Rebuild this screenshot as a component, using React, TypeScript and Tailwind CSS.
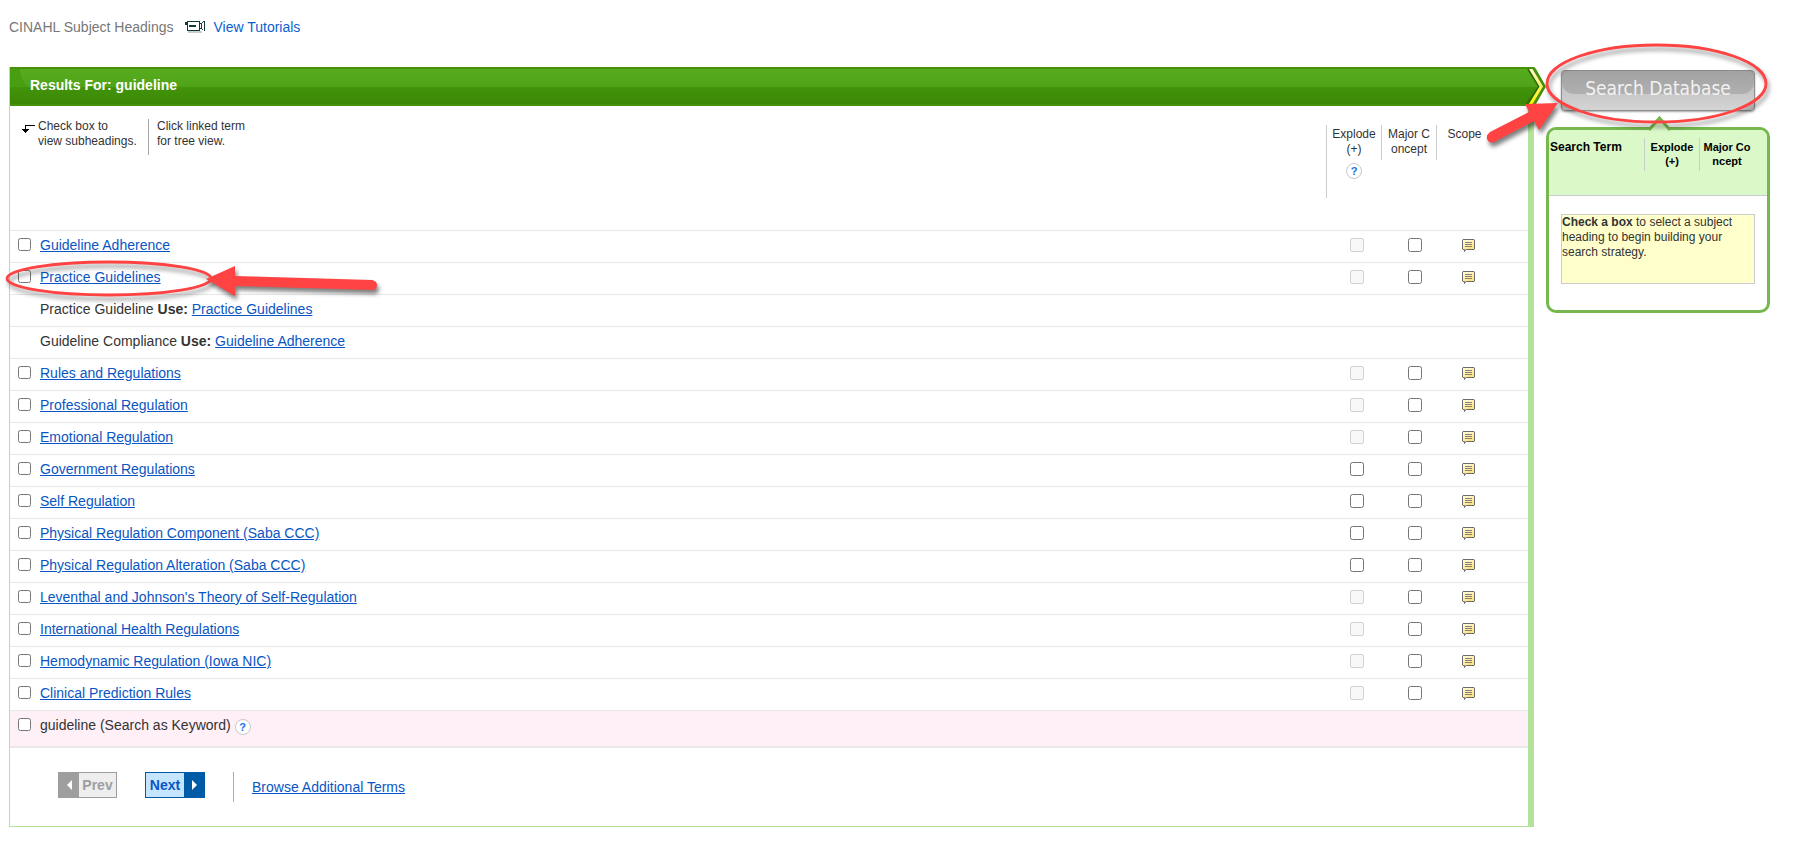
// SubjectHeadings — CINAHL subject heading results with the search strategy panel
import clsx from "clsx"

interface Heading {
  id: string
  term: string
  use?: string
  explode?: boolean
  highlighted?: boolean
}

const headings: Heading[] = [
  { id: "ga", term: "Guideline Adherence" },
  { id: "pg", term: "Practice Guidelines", highlighted: true },
  { id: "pgu", term: "Practice Guideline", use: "Practice Guidelines" },
  { id: "gcu", term: "Guideline Compliance", use: "Guideline Adherence" },
  { id: "rr", term: "Rules and Regulations" },
  { id: "pr", term: "Professional Regulation" },
  { id: "er", term: "Emotional Regulation" },
  { id: "gr", term: "Government Regulations", explode: true },
  { id: "sr", term: "Self Regulation", explode: true },
  { id: "prc", term: "Physical Regulation Component (Saba CCC)", explode: true },
  { id: "pra", term: "Physical Regulation Alteration (Saba CCC)", explode: true },
  { id: "lj", term: "Leventhal and Johnson's Theory of Self-Regulation" },
  { id: "ihr", term: "International Health Regulations" },
  { id: "hr", term: "Hemodynamic Regulation (Iowa NIC)" },
  { id: "cpr", term: "Clinical Prediction Rules" },
]

const linkClass = "text-[#0a55c4] underline underline-offset-1"

function CameraIcon() {
  return (
    <svg className="block" width="20" height="12" viewBox="0 0 20 12" shapeRendering="crispEdges" aria-hidden="true">
      <path d="M3 10h14v2H3z" fill="#c8cfcf" />
      <path d="M2 0h13v10H2z" fill="#0f3b3b" />
      <path d="M0 1h2v3H0z" fill="#0f3b3b" />
      <path d="M3 1h11v8H3z" fill="#fff" />
      <path d="M4 4h7v2H4z" fill="#0f3b3b" />
      <path d="M15 2h2v1h-2zM15 7h2v1h-2zM17 1h1v1h-1zM17 8h1v1h-1zM18 0h2v10h-1V1h-1z" fill="#0f3b3b" />
      <path d="M16 3h1v4h-1z" fill="#0f3b3b" />
    </svg>
  )
}

function NoteIcon() {
  return (
    <svg className="block" width="13" height="13" viewBox="0 0 13 13" aria-hidden="true">
      <defs>
        <linearGradient id="note" x1="0" y1="0" x2="0.4" y2="1">
          <stop offset="0" stopColor="#fffef0" />
          <stop offset="1" stopColor="#ffe06a" />
        </linearGradient>
      </defs>
      <path d="M1 .5h11l.5.5v9l-.5.5H4L2.500 12.500V10.500H1L.5 10V1z" fill="url(#note)" stroke="#6c6c6c" />
      <path d="M3 3.500h7M3 5.500h7M3 7.500h7" stroke="#857f78" />
    </svg>
  )
}

function HelpButton({ label }: { label: string }) {
  return (
    <button
      aria-label={label}
      className="flex size-4 items-center justify-center rounded-full border border-[#c4cace] bg-white text-[11px] leading-none font-bold text-[#1a73e8]"
    >
      ?
    </button>
  )
}

function Ellipse({ className, w, h }: { className: string; w: number; h: number }) {
  return (
    <svg
      className={clsx("pointer-events-none absolute overflow-visible", className)}
      width={w}
      height={h}
      aria-hidden="true"
    >
      <ellipse
        cx={w / 2}
        cy={h / 2}
        rx={w / 2 - 1}
        ry={h / 2 - 1}
        fill="none"
        stroke="#ff4343"
        strokeWidth="2.800"
        style={{ filter: "drop-shadow(2px 4px 2px rgba(0,0,0,0.4))" }}
      />
    </svg>
  )
}

function Row({ heading }: { heading: Heading }) {
  const { id, term, use, explode, highlighted } = heading
  return (
    <tr className="h-8 border-b border-[#e8e8e8]">
      <td className="relative pb-1 pl-2">
        {!use && (
          <input id={id} type="checkbox" aria-label={term} className="block size-[13px]" />
        )}
        {highlighted && (
          <>
            <Ellipse className="-top-0.5 -left-1" w={206} h={35} />
            <svg
              className="pointer-events-none absolute top-0 left-[196px] z-10 overflow-visible"
              width="172"
              height="34"
              aria-hidden="true"
            >
              <path
                d="M0 16L29 3V13L166 17Q171 18 171 22Q171 27 166 27L29 23V33Z"
                fill="#ff4343"
                style={{ filter: "drop-shadow(2px 4px 2px rgba(0,0,0,0.5))" }}
              />
            </svg>
          </>
        )}
      </td>
      <td className="pb-0.5">
        {use ? (
          <>
            {term} <b>Use:</b>{" "}
            <a href="#" className={linkClass}>{use}</a>
          </>
        ) : (
          <a href="#" className={linkClass}>{term}</a>
        )}
      </td>
      <td className="pb-0.5 pl-6">
        {!use && (
          <input type="checkbox" disabled={!explode} aria-label={`Explode ${term}`} className="block size-3.5" />
        )}
      </td>
      <td className="pb-0.5 pl-[27px]">
        {!use && <input type="checkbox" aria-label={`Major concept ${term}`} className="block size-3.5" />}
      </td>
      <td className="pb-0.5 pl-[26px]">
        {!use && (
          <button aria-label={`Scope of ${term}`} className="block">
            <NoteIcon />
          </button>
        )}
      </td>
    </tr>
  )
}

function ResultsHeader() {
  return (
    <div className="relative -mr-3 flex h-[39px] items-center">
      <div className="absolute inset-y-0 right-5 left-0 border-y-2 border-[#45910b] bg-linear-to-b from-[#57ac1e] from-0% via-[#4fa317] via-50% to-[#3d8b06]" />
      <div className="absolute right-5 bottom-0.5 left-0 h-[17px] bg-linear-to-b from-[#42940b] to-[#3b8805]" />
      <svg className="absolute top-0 left-0" width="28" height="39" aria-hidden="true">
        <path d="M0 2H10Q11 14 18 20H0Z" fill="#479e10" />
      </svg>
      <svg className="absolute top-0 right-0" width="32" height="39" viewBox="0 0 32 39" aria-hidden="true">
        <defs>
          <linearGradient id="bar" x1="0" y1="0" x2="0" y2="1">
            <stop offset="0" stopColor="#57ac1e" />
            <stop offset="0.500" stopColor="#4fa317" />
            <stop offset="0.510" stopColor="#42940b" />
            <stop offset="1" stopColor="#3b8805" />
          </linearGradient>
          <linearGradient id="chevron" x1="0" y1="0" x2="0" y2="1">
            <stop offset="0" stopColor="#fffbd0" />
            <stop offset="0.500" stopColor="#fdf06e" />
            <stop offset="1" stopColor="#fff600" />
          </linearGradient>
        </defs>
        <path d="M0 0H19Q21 0 22 2L32 19.500L22 37Q21 39 19 39H0Z" fill="#45910b" />
        <path d="M0 2H14L25 19.500L13 37H0Z" fill="url(#bar)" />
        <path d="M14 2L25 19.500L13 37" fill="none" stroke="#2d6b03" strokeWidth="2" />
        <path d="M15 2H18.500L29 19.500L18.500 37H15L25.500 19.500Z" fill="url(#chevron)" />
      </svg>
      <h1 className="relative pb-1 pl-5 font-bold text-white">Results For: guideline</h1>
    </div>
  )
}

function ResultsTable() {
  return (
    <table className="w-full table-fixed border-collapse">
      <colgroup>
        <col className="w-[30px]" />
        <col />
        <col className="w-[55px]" />
        <col className="w-[55px]" />
        <col className="w-[92px]" />
      </colgroup>
      <thead className="text-xs leading-[15px]">
        <tr className="h-[124px] border-b border-[#e8e8e8] align-top">
          <th colSpan={2} className="pt-[13px] pl-3 text-left font-normal">
            <div className="flex">
              <svg className="mt-[5px] mr-[3px]" width="13" height="10" viewBox="0 0 13 10" shapeRendering="crispEdges" aria-hidden="true">
                <path d="M3 1H13V2H4V5H7V6H6V7H5V8H4V9H3V8H2V7H1V6H0V5H3Z" fill="#000" />
              </svg>
              <p className="w-[110px]">
                Check box to
                <br />
                view subheadings.
              </p>
              <p className="h-9 border-l border-[#aaa] pl-2">
                Click linked term
                <br />
                for tree view.
              </p>
            </div>
          </th>
          <th className="pt-[19px] font-normal">
            <div className="flex h-[73px] flex-col items-center border-l border-[#ccc] pt-0.5">
              <span>Explode</span>
              <span className="mb-1.5">(+)</span>
              <HelpButton label="Explode help" />
            </div>
          </th>
          <th className="pt-[19px] font-normal">
            <div className="h-[35px] border-l border-[#ccc] pt-0.5">
              Major C<br />
              oncept
            </div>
          </th>
          <th className="pt-[19px] font-normal">
            <div className="h-[35px] border-l border-[#ccc] pt-0.5 pr-9">Scope</div>
          </th>
        </tr>
      </thead>
      <tbody>
        {headings.map((heading) => (
          <Row key={heading.id} heading={heading} />
        ))}
        <tr className="h-[37px] border-b-2 border-[#e8e8e8] bg-[#ffeff6]">
          <td className="pb-2 pl-2">
            <input id="keyword" type="checkbox" className="block size-[13px]" />
          </td>
          <td colSpan={4} className="pb-0.5">
            <div className="flex items-center gap-1">
              <label htmlFor="keyword" className="pb-1">guideline (Search as Keyword)</label>
              <HelpButton label="Keyword help" />
            </div>
          </td>
        </tr>
      </tbody>
    </table>
  )
}

function Pager() {
  return (
    <div className="flex h-[78px] items-start pt-6 pl-12">
      <button disabled className="flex h-[26px] items-center border border-[#9e9e9e] bg-[#eee] font-bold text-[#9e9e9e]">
        <span className="flex h-full w-5 items-center justify-center bg-[#9e9e9e]">
          <svg width="5" height="10" aria-hidden="true">
            <path d="M5 0V10L0 5Z" fill="#fff" />
          </svg>
        </span>
        <span className="w-[37px] text-center">Prev</span>
      </button>
      <button className="ml-7 flex h-[26px] items-center border border-[#005ba6] bg-[#c5e5ff] font-bold text-[#0a55c4]">
        <span className="w-[38px] text-center">Next</span>
        <span className="flex h-full w-5 items-center justify-center bg-[#005ba6]">
          <svg width="5" height="10" aria-hidden="true">
            <path d="M0 0V10L5 5Z" fill="#fff" />
          </svg>
        </span>
      </button>
      <div className="ml-7 flex h-[30px] items-center border-l border-[#8db4d6] pl-[18px]">
        <a href="#" className={linkClass}>Browse Additional Terms</a>
      </div>
    </div>
  )
}

function SearchPanel() {
  return (
    <aside className="relative w-56 shrink-0 pt-[3px]">
      <button className="relative mx-auto block h-[41px] w-[194px] overflow-hidden rounded-sm border border-[#8c8c8c] bg-linear-to-b from-[#b8b8b8] to-[#d4d4d4] pb-1 font-['DejaVu_Sans_Condensed','DejaVu_Sans',sans-serif] text-[19px] text-[#f2f2f2] shadow-[0_1px_2px_rgba(0,0,0,0.35)]">
        <span className="absolute inset-x-0 top-0 h-[23px] rounded-b-xl bg-linear-to-b from-[#a2a2a2] to-[#b0b0b0]" />
        <span className="relative">Search Database</span>
      </button>
      <div className="relative mt-4 h-[186px] rounded-[10px] border-3 border-[#76b84f] bg-white">
        <svg className="absolute -top-[15px] left-[99px]" width="24" height="16" aria-hidden="true">
          <path d="M2 15L12 4L22 15V16H2Z" fill="#dbf8c8" />
          <path d="M1 15L11.500 3L22 15" fill="none" stroke="#76b84f" strokeWidth="3" />
        </svg>
        <div className="flex h-[66px] rounded-t-[7px] border-b border-[#ccc] bg-[#dbf8c8] pt-2 text-[11px] leading-[14px] font-bold text-black">
          <div className="w-[95px] pt-px pl-px text-xs">Search Term</div>
          <div className="h-[33px] w-[55px] border-l border-[#ccc] pt-0.5 text-center">
            Explode
            <br />
            (+)
          </div>
          <div className="h-[33px] w-[55px] border-l border-[#ccc] pt-0.5 text-center">
            Major Co
            <br />
            ncept
          </div>
        </div>
        <p className="mx-3 mt-[18px] h-[70px] border border-[#ccc] bg-[#ffffcc] text-xs leading-[15px]">
          <b>Check a box</b> to select a subject heading to begin building your search strategy.
        </p>
      </div>
      <Ellipse className="top-[-23px] left-0" w={221} h={79} />
      <svg
        className="pointer-events-none absolute top-[35px] left-[-57px] overflow-visible"
        width="71"
        height="42"
        aria-hidden="true"
      >
        <path
          d="M69 1L50 28L45 19L5 40Q0 42 -2 37Q-3 33 1 30L40 10L36 2Z"
          fill="#ff4343"
          style={{ filter: "drop-shadow(2px 4px 2px rgba(0,0,0,0.5))" }}
        />
      </svg>
    </aside>
  )
}

export default function App() {
  return (
    <div className="bg-white pt-[17px] pr-[27px] pb-3.5 pl-[9px] font-['Liberation_Sans',Arial,sans-serif] text-sm text-[#333]">
      <header className="flex h-[50px] items-start">
        <span className="mr-3 text-[#777]">CINAHL Subject Headings</span>
        <a href="#" className="flex text-[#0a5fcc]">
          <span className="mt-1 mr-2">
            <CameraIcon />
          </span>
          View Tutorials
        </a>
      </header>
      <div className="flex items-start gap-3">
        <main className="min-w-0 flex-1 border-r-6 border-b border-l border-[#b5e29b]">
          <div className="-mr-1.5">
            <ResultsHeader />
          </div>
          <ResultsTable />
          <Pager />
        </main>
        <SearchPanel />
      </div>
    </div>
  )
}
